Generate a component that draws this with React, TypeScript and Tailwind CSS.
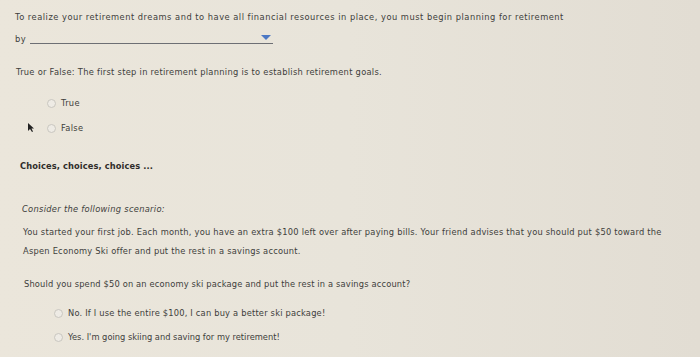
import React from 'react';

const Radio = () => (
  <span className="inline-block w-[9px] h-[9px] rounded-full border border-[#c9c6c0] bg-[#eeebe5] shrink-0" />
);

const Option = ({ label, className }: { label: string; className?: string }) => (
  <div className={'flex items-center gap-[5px] ' + (className ?? '')}>
    <Radio />
    <span>{label}</span>
  </div>
);

export default function App() {
  return (
    <div
      className="w-[700px] h-[357px] overflow-hidden bg-gradient-to-r from-[#ebe6db] via-[#e8e4da] to-[#e2ddd3] text-[#403e3b] text-[8.3px] leading-[10px]"
      style={{ fontFamily: '"DejaVu Sans", Verdana, sans-serif' }}
    >
      {/* Question 1 */}
      <div className="pt-[12px] pl-[15px] tracking-[0.5px]">
        To realize your retirement dreams and to have all financial resources in place, you must begin planning for retirement
      </div>
      <div className="flex items-end pl-[15px] mt-[12px] tracking-[0.4px]">
        <span>by</span>
        <div className="relative ml-[4px] w-[243px] h-[7px] border-b border-[#6d6f74]">
          <span className="absolute right-[2px] -top-[2px] w-0 h-0 border-l-[5px] border-r-[5px] border-t-[5px] border-l-transparent border-r-transparent border-t-[#4c78c4]" />
        </div>
      </div>

      {/* Question 2 */}
      <div className="pl-[16px] mt-[23px] tracking-[0.28px]">
        True or False: The first step in retirement planning is to establish retirement goals.
      </div>
      <div className="pl-[47px] mt-[21px] flex flex-col gap-[15px] tracking-[0.3px]">
        <Option label="True" />
        <div className="relative">
          <svg className="absolute -left-[20px] -top-[1px]" width="8" height="11" viewBox="0 0 8 11">
            <path d="M1 1 L1 9 L3 7 L5 10 L6 9.5 L4.5 6.5 L7 6.5 Z" fill="#222" />
          </svg>
          <Option label="False" />
        </div>
      </div>

      <div className="pl-[20px] mt-[28px] font-bold text-[#2f2d2a] tracking-[0.1px]">Choices, choices, choices ...</div>

      {/* Scenario */}
      <div className="pl-[22px] mt-[33px] italic tracking-[0.3px]">Consider the following scenario:</div>
      <div className="pl-[23px] mt-[9px] leading-[19px] tracking-[0.23px]">
        You started your first job. Each month, you have an extra $100 left over after paying bills. Your friend advises that you should put $50 toward the
        <br />
        Aspen Economy Ski offer and put the rest in a savings account.
      </div>
      <div className="pl-[24px] mt-[18px] tracking-[0.16px]">Should you spend $50 on an economy ski package and put the rest in a savings account?</div>
      <div className="pl-[54px] mt-[19px] flex flex-col gap-[14px]">
        <Option label="No. If I use the entire $100, I can buy a better ski package!" className="tracking-[0.2px]" />
        <Option label="Yes. I'm going skiing and saving for my retirement!" />
      </div>
    </div>
  );
}
